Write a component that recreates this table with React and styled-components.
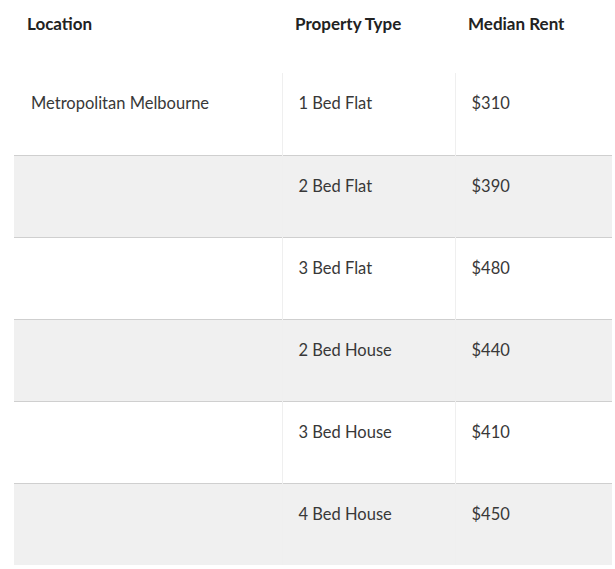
import React from "react";
import styled, { createGlobalStyle } from "styled-components";

const GlobalStyle = createGlobalStyle`
  body {
    margin: 0;
    background: #fff;
    font-family: "Source Sans Pro", Lato, "Noto Sans", sans-serif;
  }
`;

const rows = [
  { location: "Metropolitan Melbourne", type: "1 Bed Flat", rent: "$310" },
  { location: "", type: "2 Bed Flat", rent: "$390" },
  { location: "", type: "3 Bed Flat", rent: "$480" },
  { location: "", type: "2 Bed House", rent: "$440" },
  { location: "", type: "3 Bed House", rent: "$410" },
  { location: "", type: "4 Bed House", rent: "$450" },
];

const Wrapper = styled.main`
  padding: 0 3px 0 14px;
`;

const Table = styled.table`
  width: 598px;
  border-collapse: collapse;
  table-layout: fixed;
`;

const HeadCell = styled.th`
  height: 73px;
  box-sizing: border-box;
  padding: 14px 13px 0;
  vertical-align: top;
  text-align: left;
  font-size: 17px;
  line-height: 20px;
  font-weight: 700;
  color: #222;
`;

const Row = styled.tr`
  background: ${(p) => (p.$striped ? "#f0f0f0" : "#fff")};
  border-bottom: 1px solid #cfcfcf;
  &:last-child {
    border-bottom: none;
  }
`;

const Cell = styled.td`
  height: 82px;
  box-sizing: border-box;
  padding: 20px 16px 0 ${(p) => (p.$first ? "17px" : "16px")};
  vertical-align: top;
  font-size: 16.5px;
  line-height: 20px;
  color: #383838;
  border-left: ${(p) => (p.$first ? "none" : "1px solid #efefef")};
`;

const App = () => {
  return (
    <Wrapper>
      <GlobalStyle />
      <Table>
        <colgroup>
          <col style={{ width: 268 }} />
          <col style={{ width: 173 }} />
          <col style={{ width: 157 }} />
        </colgroup>
        <thead>
          <tr>
            <HeadCell>Location</HeadCell>
            <HeadCell>Property Type</HeadCell>
            <HeadCell>Median Rent</HeadCell>
          </tr>
        </thead>
        <tbody>
          {rows.map((r, i) => (
            <Row key={r.type} $striped={i % 2 === 1}>
              <Cell $first>{r.location}</Cell>
              <Cell>{r.type}</Cell>
              <Cell>{r.rent}</Cell>
            </Row>
          ))}
        </tbody>
      </Table>
    </Wrapper>
  );
};

export default App;
